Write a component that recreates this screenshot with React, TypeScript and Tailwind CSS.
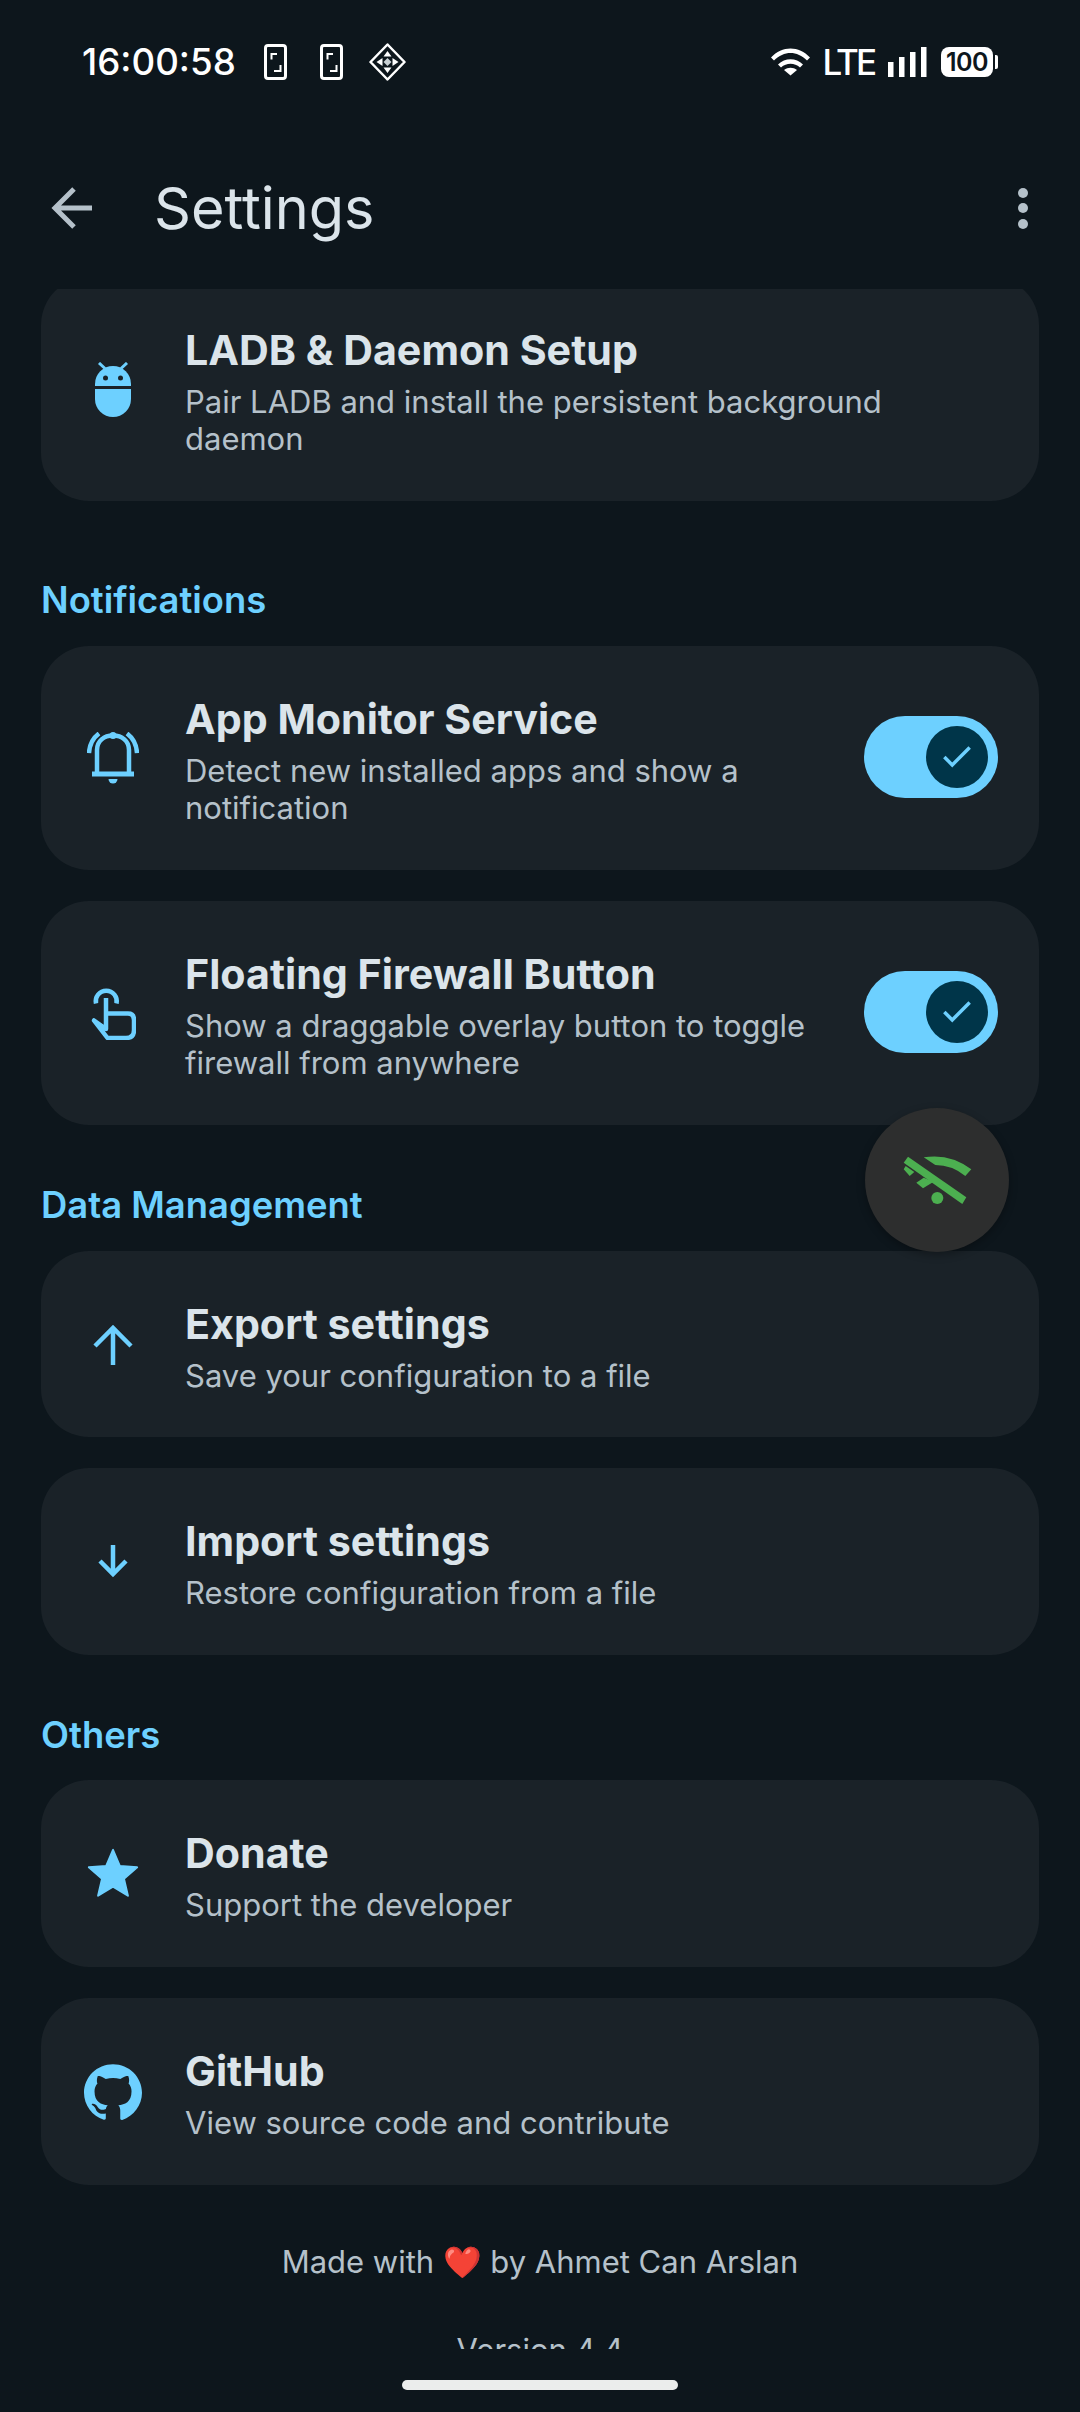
import { Check } from "lucide-react";
import type { ReactNode } from "react";

const BLUE = "#6dd0ff";

function PhoneIcon({ className }: { className?: string }) {
  return (
    <svg className={className} width="23" height="36" viewBox="0 0 23 36" fill="none">
      <rect x="1.5" y="1.5" width="20" height="33" rx="2.5" stroke="white" strokeWidth="3" />
      <path d="M13 10H7.500V15.500M10 27H16.500V21" stroke="white" strokeWidth="2" />
    </svg>
  );
}

function DiamondIcon() {
  return (
    <svg width="37" height="38" viewBox="0 0 37 38" fill="none">
      <path d="M18.500 1.500 35.500 19 18.500 36.500 1.500 19Z" stroke="white" strokeWidth="2.500" strokeLinejoin="round" />
      <path d="M18.500 8l4 5.500h-8ZM18.500 30l-4-5.500h8ZM7.500 19l6-4v8ZM29.500 19l-6-4v8Z" fill="white" />
      <path d="M18.500 15l4 4-4 4-4-4Z" fill="#c9d0d4" />
    </svg>
  );
}

function StatusBar() {
  return (
    <div className="flex h-[124px] items-center justify-between pl-[82px] pr-[82px] text-white">
      <div className="flex items-center">
        <span className="text-[36.7px] font-medium leading-[44px]">16:00:58</span>
        <PhoneIcon className="ml-[28px]" />
        <PhoneIcon className="ml-[33px]" />
        <div className="ml-[26px]">
          <DiamondIcon />
        </div>
      </div>
      <div className="flex items-center">
        <svg width="39" height="28" viewBox="0 0 39 28" fill="white">
          <path d="M0 9.500C11-2.500 28-2.500 39 9.500l-3 3C26 2.500 13 2.500 3 12.500Z" />
          <path d="M7 16.500c7-7 18-7 25 0l-3 3c-5.500-5-13.500-5-19 0Z" />
          <path d="M13 22c4-3 9-3 13 0l-6.500 5.500Z" />
        </svg>
        <span className="ml-[13px] text-[35px] font-medium leading-[40px] tracking-[-3px]">LTE</span>
        <svg className="ml-[14px]" width="39" height="30" viewBox="0 0 39 30" fill="white">
          <rect x="0" y="15" width="5.500" height="15" />
          <rect x="11" y="10" width="5.500" height="20" />
          <rect x="22" y="5" width="5.500" height="25" />
          <rect x="33" y="0" width="5.500" height="30" />
        </svg>
        <div className="ml-[14px] flex h-[30px] w-[52px] items-center justify-center rounded-[8px] bg-white text-[25px] font-semibold leading-none tracking-[-0.5px] text-[#0d161c]">
          100
        </div>
        <div className="ml-[2px] h-[14px] w-[3px] rounded-r-[2px] bg-white" />
      </div>
    </div>
  );
}

function Switch() {
  return (
    <div className="-mt-[2px] flex h-[82px] w-[134px] shrink-0 items-center justify-end rounded-full bg-[#6dd0ff] pr-[10px]">
      <div className="flex h-[62px] w-[62px] items-center justify-center rounded-full bg-[#003549]">
        <Check size={38} strokeWidth={2.2} color={BLUE} strokeLinecap="butt" strokeLinejoin="miter" />
      </div>
    </div>
  );
}

function Row({ icon, title, sub, right, className }: { icon: ReactNode; title: string; sub: string; right?: ReactNode; className?: string }) {
  return (
    <div className={`flex items-center rounded-[48px] bg-[#1a2228] pl-[40px] pr-[41px] ${className ?? ""}`}>
      <div className="flex w-[64px] shrink-0 items-center justify-center">{icon}</div>
      <div className="ml-[40px] min-w-0 flex-1 pt-[3px]">
        <div className="text-[41.2px] font-bold leading-[52px] text-[#dbe4ea]">{title}</div>
        <div className="mt-[7px] text-[31px] leading-[37px] text-[#b5c1ca]">{sub}</div>
      </div>
      {right}
    </div>
  );
}

function SectionLabel({ children, className }: { children: ReactNode; className?: string }) {
  return <div className={`text-[36.4px] font-semibold leading-[44px] text-[#6dd0ff] ${className ?? ""}`}>{children}</div>;
}

export default function App() {
  return (
    <div className="relative h-[2412px] w-[1080px] overflow-hidden bg-[#0d161c] font-['Inter','Noto_Sans',sans-serif]">
      <StatusBar />

      {/* Top app bar */}
      <div className="flex h-[165px] items-center justify-between pl-[51px] pr-[52px] pt-[3px]">
        <div className="flex items-center">
          <svg width="41" height="42" viewBox="0 0 41 42" fill="none" stroke="#b5c1ca" strokeWidth="5">
            <path d="M41 21H5M23 2 4 21 23 40" />
          </svg>
          <span className="ml-[62px] text-[57.6px] leading-[68px] text-[#dbe4ea]">Settings</span>
        </div>
        <div className="flex flex-col gap-[5.500px]">
          <div className="h-[10px] w-[10px] rounded-full bg-[#b5c1ca]" />
          <div className="h-[10px] w-[10px] rounded-full bg-[#b5c1ca]" />
          <div className="h-[10px] w-[10px] rounded-full bg-[#b5c1ca]" />
        </div>
      </div>

      {/* Scroll area, the first card is scrolled partly under the bar */}
      <div className="h-[2060px] overflow-hidden px-[41px]">
        <Row
          className="-mt-[12px] h-[224px]"
          title="LADB & Daemon Setup"
          sub="Pair LADB and install the persistent background daemon"
          icon={
            <svg width="36" height="55" viewBox="0 0 36 55" fill={BLUE}>
              <path d="M0 24V22A18 18 0 0 1 36 22V24Z" />
              <path d="M0 27H36V37A18 18 0 0 1 0 37Z" />
              <path d="M4 1l6 5.500M32 1l-6 5.500" stroke={BLUE} strokeWidth="3" />
              <circle cx="10.500" cy="16" r="2.500" fill="#1a2228" />
              <circle cx="25.500" cy="16" r="2.500" fill="#1a2228" />
            </svg>
          }
        />
        <SectionLabel className="mt-[77px]">Notifications</SectionLabel>
        <div className="mt-[24px] flex flex-col gap-[31px]">
          <Row
            className="h-[224px]"
            title="App Monitor Service"
            sub="Detect new installed apps and show a notification"
            right={<Switch />}
            icon={
              <svg width="52" height="52" viewBox="0 0 52 52" fill="none" stroke={BLUE} strokeWidth="4.500">
                <path d="M10 42V18C10 9 17 3.500 26 3.500S42 9 42 18V42" />
                <path d="M5 42H47" strokeWidth="5" />
                <circle cx="26" cy="3.500" r="3.500" fill={BLUE} stroke="none" />
                <path d="M21.500 47h9a4.500 4.500 0 0 1-9 0Z" fill={BLUE} stroke="none" />
                <path d="M2 21C2.500 13 6 6 12 1.500M50 21C49.500 13 46 6 40 1.500" />
              </svg>
            }
          />
          <Row
            className="h-[224px]"
            title="Floating Firewall Button"
            sub="Show a draggable overlay button to toggle firewall from anywhere"
            right={<Switch />}
            icon={
              <svg width="45" height="54" viewBox="0 0 45 54" fill="none" stroke={BLUE} strokeWidth="4.500" strokeLinejoin="round">
                <path d="M5 17.500A10.500 10.500 0 1 1 25.500 17.500" />
                <path d="M15 12V43L3 34.500 16.500 52H35Q43 52 43 44V34Q43 27.500 37 27.500H15" />
              </svg>
            }
          />
        </div>
        <SectionLabel className="mt-[58px]">Data Management</SectionLabel>
        <div className="mt-[24px] flex flex-col gap-[31px]">
          <Row
            className="h-[186px]"
            title="Export settings"
            sub="Save your configuration to a file"
            icon={
              <svg width="40" height="41" viewBox="0 0 40 41" fill="none" stroke={BLUE} strokeWidth="4.500">
                <path d="M20 41V4M2 22 20 4 38 22" />
              </svg>
            }
          />
          <Row
            className="h-[187px]"
            title="Import settings"
            sub="Restore configuration from a file"
            icon={
              <svg width="30" height="33" viewBox="0 0 30 33" fill="none" stroke={BLUE} strokeWidth="4.500">
                <path d="M15 0V29M2 16 15 29 28 16" />
              </svg>
            }
          />
        </div>
        <SectionLabel className="mt-[58px]">Others</SectionLabel>
        <div className="mt-[23px] flex flex-col gap-[31px]">
          <Row
            className="h-[187px]"
            title="Donate"
            sub="Support the developer"
            icon={
              <svg width="58" height="58" viewBox="0 0 24 24" fill={BLUE} stroke={BLUE} strokeWidth="0.8" strokeLinejoin="round">
                <path d="M12 17.270 18.180 21l-1.640-7.030L22 9.240l-7.190-.610L12 2 9.190 8.630 2 9.240l5.460 4.730L5.820 21Z" />
              </svg>
            }
          />
          <Row
            className="h-[187px]"
            title="GitHub"
            sub="View source code and contribute"
            icon={
              <svg width="58" height="58" viewBox="0 0 24 24" fill={BLUE}>
                <path d="M12 .5C5.370.5 0 5.780 0 12.300c0 5.200 3.440 9.620 8.200 11.180.6.100.820-.260.820-.570v-2c-3.340.700-4.040-1.580-4.040-1.580-.550-1.360-1.330-1.720-1.330-1.720-1.090-.730.080-.720.080-.720 1.200.080 1.840 1.210 1.840 1.210 1.070 1.800 2.800 1.280 3.490.980.100-.760.420-1.280.760-1.580-2.670-.300-5.470-1.310-5.470-5.830 0-1.290.470-2.340 1.240-3.170-.130-.300-.540-1.500.120-3.130 0 0 1-.320 3.300 1.210a11.600 11.600 0 0 1 6 0c2.300-1.530 3.300-1.210 3.300-1.210.660 1.630.250 2.830.120 3.130.770.830 1.240 1.880 1.240 3.170 0 4.530-2.810 5.530-5.490 5.820.430.370.820 1.100.820 2.210v3.280c0 .310.220.680.830.570C20.570 21.910 24 17.500 24 12.300 24 5.780 18.630.5 12 .5Z" />
              </svg>
            }
          />
        </div>
        <div className="mt-[52px] text-center text-[31px] leading-[50px] text-[#b5c1ca]">
          Made with <span className="font-['Noto_Color_Emoji','DejaVu_Sans']">❤️</span> by Ahmet Can Arslan
        </div>
        <div className="mt-[42px] text-center text-[31px] leading-[40px] text-[#b5c1ca]">Version 4.4</div>
      </div>

      {/* Floating firewall button */}
      <div className="absolute left-[865px] top-[1108px] flex h-[144px] w-[144px] items-center justify-center rounded-full bg-[#2d2e2e] shadow-[0_3px_8px_rgba(0,0,0,0.3)]">
        <svg width="70" height="50" viewBox="0 0 70 50" fill="#4caf50">
          <path d="M6 1.700 64.300 42.300 60.300 49 1.700 7.700Z" />
          <path d="M21.700 2.300Q48-2 69.300 14.300L63.300 21Q50 10 33.300 10Z" />
          <path d="M1.700 14.300 7.700 21 12.300 17 3.700 11Z" />
          <path d="M14.300 27.700 21 33.300 31.700 26.700 21.700 22.700Z" />
          <circle cx="35.300" cy="43" r="6" />
        </svg>
      </div>

      <div className="absolute left-[402px] top-[2380px] h-[10px] w-[276px] rounded-full bg-[#ebedec]" />
    </div>
  );
}
